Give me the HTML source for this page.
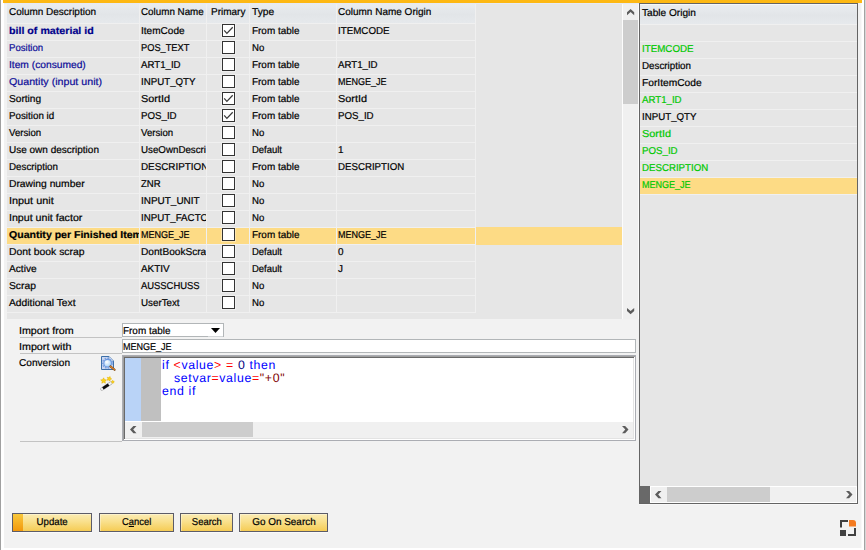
<!DOCTYPE html>
<html><head><meta charset="utf-8"><title>Import</title>
<style>
html,body{margin:0;padding:0;background:#fff;}
body{width:866px;height:550px;overflow:hidden;font-family:"Liberation Sans",sans-serif;font-size:10px;color:#000;text-rendering:geometricPrecision;}
#win{position:relative;width:866px;height:550px;background:#fff;overflow:hidden;}
#win:before{content:"";position:absolute;left:0;top:0;width:1px;height:550px;background:#a0a0a0;}
#win:after{content:"";position:absolute;left:864px;top:0;width:2px;height:550px;background:linear-gradient(to right,#a3a3a3 50%,#d6d6d6 50%);}
#topbar{position:absolute;left:3px;top:0;width:859px;height:3px;background:#fdb813;}
#body{position:absolute;left:4px;top:3px;width:857px;height:545px;background:#f2f2f2;border-right:1px solid #f9f9f9;}
#lt{position:absolute;left:7px;top:4px;width:615px;height:315px;background:#e6e6e6;overflow:hidden;}
.hr{position:absolute;left:0;top:0;width:469px;height:19px;border-bottom:1px solid #f0f0f0;}
.hc{position:absolute;top:0;height:19px;line-height:17px;box-sizing:content-box;border-right:1px solid #f0f0f0;background:linear-gradient(to bottom,#e9ecef 0%,#e2e5e8 55%,#e6e9ec 100%);white-space:nowrap;overflow:hidden;}
.hc{width:auto}
.r{position:absolute;left:0;width:469px;height:16px;border-bottom:1px solid #f0f0f0;}
.r.sel{background:#fddb85;}
#selx{position:absolute;left:469px;top:223px;width:146px;height:18px;background:#fddb85;}
.c{position:absolute;top:0;height:16px;line-height:15px;box-sizing:content-box;border-right:1px solid #f0f0f0;white-space:nowrap;overflow:hidden;}
.c2{text-align:left;}
.cb{position:absolute;left:15px;top:0;width:11px;height:11px;border:1px solid #333;background:#fff;box-shadow:0 0 0 1px rgba(255,255,255,.35);}
.cb svg{position:absolute;left:0;top:0;}
.bl{color:#0c0c98;}
.bb{color:#00008b;font-weight:bold;}
.bd{font-weight:bold;}
#vs{position:absolute;left:622px;top:4px;width:17px;height:315px;background:#f0f0f0;box-shadow:inset 1px 0 0 #fcfcfc,inset -1px 0 0 #fcfcfc;}
svg{overflow:visible;}
#vs .thumb{position:absolute;left:1px;top:16px;width:15px;height:84px;background:#cdcdcd;}
#vs .au{position:absolute;left:4.8px;top:5px;}
#vs .ad{position:absolute;left:4.8px;top:304px;}
#rp{position:absolute;left:639px;top:3px;width:217px;height:499px;border:1px solid #646464;background:#e6e6e6;overflow:hidden;}
#rpo{position:absolute;left:639px;top:504px;width:219px;height:1px;background:#f8f8f8;}
.rh{position:absolute;left:0;top:0;width:217px;height:19px;border-top:1px solid #f6f8fa;border-bottom:1px solid #f0f0f0;line-height:17px;padding:0 0 0 2px;box-sizing:content-box;height:19px;background:linear-gradient(to bottom,#e9ecef 0%,#e2e5e8 55%,#e6e9ec 100%);}
.rr{position:absolute;left:0;width:215px;height:16px;line-height:15px;padding-left:2px;border-bottom:1px solid #f0f0f0;white-space:nowrap;}
.rr.g{color:#00c800;}
.rr.sel{background:#fddb85;}
.corner{position:absolute;left:0;top:482px;width:10px;height:17px;background:#696969;}
#hs2{position:absolute;left:10px;top:482px;width:207px;height:17px;background:#f0f0f0;box-shadow:inset 1px 1px 0 #fff,inset -1px -1px 0 #fff;}
#hs2 .thumb{position:absolute;left:17px;top:1px;width:103px;height:15px;background:#cdcdcd;}
#hs2 .al{position:absolute;left:4.8px;top:4.9px;}
#hs2 .ar{position:absolute;left:195.8px;top:4.9px;}
.lbl{position:absolute;left:19px;line-height:15px;height:14px;white-space:nowrap;}
.ul{position:absolute;left:20px;width:102px;height:1px;background:#c3c3c3;}
#dd{position:absolute;left:122px;top:323px;width:100px;height:12px;border:1px solid #b2b6b8;background:#fff;line-height:15px;padding-left:0;box-sizing:content-box;width:100px;white-space:nowrap;}
#dd svg{position:absolute;left:88px;top:4px;}
#dd:after{content:"";position:absolute;left:85px;top:12px;width:15px;height:1px;background:#d4d7d9;}
#inp{position:absolute;left:122px;top:339px;width:512px;height:12px;border:1px solid #b2b6b8;background:#fff;line-height:15px;padding-left:0;white-space:nowrap;}
#ed{position:absolute;left:122px;top:355px;width:514px;height:86px;background:#fff;box-shadow:inset 1px 1px 0 #abadb3,inset -1px -1px 0 #abadb3,inset 2px 2px 0 #a0a0a0,inset -2px -2px 0 #fff,inset 3px 3px 0 #696969,inset -3px -3px 0 #e3e3e3;}
.btn{position:absolute;top:513px;height:17px;border:1px solid #5c5c68;background:linear-gradient(to bottom,#fbecb4 0%,#f9e08c 45%,#f5cc55 100%);text-align:center;line-height:17px;box-shadow:0 1px 0 #fafafa,inset 1px 1px 0 rgba(255,255,255,.35);}
.btn .acc{position:absolute;left:0;top:0;width:10px;height:17px;background:linear-gradient(to bottom,#f9c83c,#f2980c);}
.btn em{font-style:normal;text-decoration:underline;}
#rsz{position:absolute;left:840px;top:520px;}
.ic{position:absolute;}
#ed .g1{position:absolute;left:3px;top:3px;width:16px;height:63px;background:#b9d3f7;}
#ed .g2{position:absolute;left:19px;top:3px;width:20px;height:63px;background:#c0c0c0;}
#ed .code{position:absolute;left:40px;top:4px;font-size:12.3px;line-height:13px;white-space:pre;letter-spacing:0.66px;}
#ed .code b{font-weight:normal;color:#0000ff;}
#ed .code i{font-style:normal;color:#ff0000;}
#ed .code u{text-decoration:none;color:#000080;}
#ed .code s{text-decoration:none;color:#800000;}
#ed .code .in{padding-left:12px;}
#hs1{position:absolute;left:3px;top:66px;width:508px;height:17px;background:#f0f0f0;box-shadow:inset 0 1px 0 #fff;}
#hs1 .thumb{position:absolute;left:17px;top:1px;width:111px;height:15px;background:#cdcdcd;}
#hs1 .al{position:absolute;left:4.8px;top:4.9px;}
#hs1 .ar{position:absolute;left:496.6px;top:4.9px;}
.t{display:inline-block;transform:scaleX(.92);transform-origin:0 0;}
.bb .t,.bd .t{transform:scaleX(.97);}
.btn .t{transform-origin:50% 0;}
.t{-webkit-text-stroke:0.2px currentColor;}
#l3{position:absolute;left:4px;top:3px;width:635px;height:1px;background:#e6eaf4;}
</style></head>
<body>
<div id="win">
<div id="topbar"></div>
<div id="body"></div>
<div id="l3"></div>
<div id="lt">
<div class="hr"><div class="hc c0" style="left:0px;width:130px;padding-left:2px"><span class="t" style="transform:scaleX(0.997)">Column Description</span></div><div class="hc c1" style="left:133px;width:65px;padding-left:1px"><span class="t" style="transform:scaleX(0.982)">Column Name</span></div><div class="hc c2" style="left:200px;width:38px;padding-left:4px"><span class="t" style="transform:scaleX(0.998)">Primary</span></div><div class="hc c3" style="left:243px;width:84px;padding-left:2px"><span class="t" style="transform:scaleX(1.024)">Type</span></div><div class="hc c4" style="left:330px;width:137px;padding-left:1px"><span class="t" style="transform:scaleX(0.999)">Column Name Origin</span></div></div>
<div class="r" style="top:20px"><div class="c c0 bb" style="left:0px;width:130px;padding-left:2px"><span class="t" style="transform:scaleX(1.066)">bill of material id</span></div><div class="c c1" style="left:133px;width:65px;padding-left:1px"><span class="t" style="transform:scaleX(1.006)">ItemCode</span></div><div class="c c2" style="left:200px;width:42px;"><span class="cb"><svg width="11" height="11" viewBox="0 0 11 11"><path d="M1.2 5.4 L3.9 8.4 L9.7 2.3" fill="none" stroke="#3a3a3a" stroke-width="1.25"/></svg></span></div><div class="c c3" style="left:243px;width:84px;padding-left:2px"><span class="t" style="transform:scaleX(0.992)">From table</span></div><div class="c c4" style="left:330px;width:137px;padding-left:1px"><span class="t" style="transform:scaleX(0.978)">ITEMCODE</span></div></div>
<div class="r" style="top:37px"><div class="c c0 bl" style="left:0px;width:130px;padding-left:2px"><span class="t" style="transform:scaleX(0.96)">Position</span></div><div class="c c1" style="left:133px;width:65px;padding-left:1px"><span class="t" style="transform:scaleX(0.926)">POS_TEXT</span></div><div class="c c2" style="left:200px;width:42px;"><span class="cb"></span></div><div class="c c3" style="left:243px;width:84px;padding-left:2px"><span class="t" style="transform:scaleX(0.961)">No</span></div><div class="c c4" style="left:330px;width:137px;padding-left:1px"></div></div>
<div class="r" style="top:54px"><div class="c c0 bl" style="left:0px;width:130px;padding-left:2px"><span class="t" style="transform:scaleX(1.023)">Item (consumed)</span></div><div class="c c1" style="left:133px;width:65px;padding-left:1px"><span class="t" style="transform:scaleX(0.967)">ART1_ID</span></div><div class="c c2" style="left:200px;width:42px;"><span class="cb"></span></div><div class="c c3" style="left:243px;width:84px;padding-left:2px"><span class="t" style="transform:scaleX(0.992)">From table</span></div><div class="c c4" style="left:330px;width:137px;padding-left:1px"><span class="t" style="transform:scaleX(0.967)">ART1_ID</span></div></div>
<div class="r" style="top:71px"><div class="c c0 bl" style="left:0px;width:130px;padding-left:2px"><span class="t" style="transform:scaleX(1.066)">Quantity (input unit)</span></div><div class="c c1" style="left:133px;width:65px;padding-left:1px"><span class="t" style="transform:scaleX(0.971)">INPUT_QTY</span></div><div class="c c2" style="left:200px;width:42px;"><span class="cb"></span></div><div class="c c3" style="left:243px;width:84px;padding-left:2px"><span class="t" style="transform:scaleX(0.992)">From table</span></div><div class="c c4" style="left:330px;width:137px;padding-left:1px"><span class="t" style="transform:scaleX(0.902)">MENGE_JE</span></div></div>
<div class="r" style="top:88px"><div class="c c0" style="left:0px;width:130px;padding-left:2px"><span class="t" style="transform:scaleX(1.015)">Sorting</span></div><div class="c c1" style="left:133px;width:65px;padding-left:1px"><span class="t" style="transform:scaleX(1.09)">SortId</span></div><div class="c c2" style="left:200px;width:42px;"><span class="cb"><svg width="11" height="11" viewBox="0 0 11 11"><path d="M1.2 5.4 L3.9 8.4 L9.7 2.3" fill="none" stroke="#3a3a3a" stroke-width="1.25"/></svg></span></div><div class="c c3" style="left:243px;width:84px;padding-left:2px"><span class="t" style="transform:scaleX(0.992)">From table</span></div><div class="c c4" style="left:330px;width:137px;padding-left:1px"><span class="t" style="transform:scaleX(1.09)">SortId</span></div></div>
<div class="r" style="top:105px"><div class="c c0" style="left:0px;width:130px;padding-left:2px"><span class="t" style="transform:scaleX(0.979)">Position id</span></div><div class="c c1" style="left:133px;width:65px;padding-left:1px"><span class="t" style="transform:scaleX(0.97)">POS_ID</span></div><div class="c c2" style="left:200px;width:42px;"><span class="cb"><svg width="11" height="11" viewBox="0 0 11 11"><path d="M1.2 5.4 L3.9 8.4 L9.7 2.3" fill="none" stroke="#3a3a3a" stroke-width="1.25"/></svg></span></div><div class="c c3" style="left:243px;width:84px;padding-left:2px"><span class="t" style="transform:scaleX(0.992)">From table</span></div><div class="c c4" style="left:330px;width:137px;padding-left:1px"><span class="t" style="transform:scaleX(0.97)">POS_ID</span></div></div>
<div class="r" style="top:122px"><div class="c c0" style="left:0px;width:130px;padding-left:2px"><span class="t" style="transform:scaleX(0.964)">Version</span></div><div class="c c1" style="left:133px;width:65px;padding-left:1px"><span class="t" style="transform:scaleX(0.964)">Version</span></div><div class="c c2" style="left:200px;width:42px;"><span class="cb"></span></div><div class="c c3" style="left:243px;width:84px;padding-left:2px"><span class="t" style="transform:scaleX(0.961)">No</span></div><div class="c c4" style="left:330px;width:137px;padding-left:1px"></div></div>
<div class="r" style="top:139px"><div class="c c0" style="left:0px;width:130px;padding-left:2px"><span class="t" style="transform:scaleX(0.999)">Use own description</span></div><div class="c c1" style="left:133px;width:65px;padding-left:1px"><span class="t" style="transform:scaleX(0.975)">UseOwnDescription</span></div><div class="c c2" style="left:200px;width:42px;"><span class="cb"></span></div><div class="c c3" style="left:243px;width:84px;padding-left:2px"><span class="t" style="transform:scaleX(0.947)">Default</span></div><div class="c c4" style="left:330px;width:137px;padding-left:1px"><span class="t" style="transform:scaleX(0.99)">1</span></div></div>
<div class="r" style="top:156px"><div class="c c0" style="left:0px;width:130px;padding-left:2px"><span class="t" style="transform:scaleX(0.979)">Description</span></div><div class="c c1" style="left:133px;width:65px;padding-left:1px"><span class="t" style="transform:scaleX(0.985)">DESCRIPTION</span></div><div class="c c2" style="left:200px;width:42px;"><span class="cb"></span></div><div class="c c3" style="left:243px;width:84px;padding-left:2px"><span class="t" style="transform:scaleX(0.992)">From table</span></div><div class="c c4" style="left:330px;width:137px;padding-left:1px"><span class="t" style="transform:scaleX(0.969)">DESCRIPTION</span></div></div>
<div class="r" style="top:173px"><div class="c c0" style="left:0px;width:130px;padding-left:2px"><span class="t" style="transform:scaleX(1.03)">Drawing number</span></div><div class="c c1" style="left:133px;width:65px;padding-left:1px"><span class="t" style="transform:scaleX(0.955)">ZNR</span></div><div class="c c2" style="left:200px;width:42px;"><span class="cb"></span></div><div class="c c3" style="left:243px;width:84px;padding-left:2px"><span class="t" style="transform:scaleX(0.961)">No</span></div><div class="c c4" style="left:330px;width:137px;padding-left:1px"></div></div>
<div class="r" style="top:190px"><div class="c c0" style="left:0px;width:130px;padding-left:2px"><span class="t" style="transform:scaleX(1.085)">Input unit</span></div><div class="c c1" style="left:133px;width:65px;padding-left:1px"><span class="t" style="transform:scaleX(0.995)">INPUT_UNIT</span></div><div class="c c2" style="left:200px;width:42px;"><span class="cb"></span></div><div class="c c3" style="left:243px;width:84px;padding-left:2px"><span class="t" style="transform:scaleX(0.961)">No</span></div><div class="c c4" style="left:330px;width:137px;padding-left:1px"></div></div>
<div class="r" style="top:207px"><div class="c c0" style="left:0px;width:130px;padding-left:2px"><span class="t" style="transform:scaleX(1.064)">Input unit factor</span></div><div class="c c1" style="left:133px;width:65px;padding-left:1px"><span class="t" style="transform:scaleX(0.975)">INPUT_FACTOR</span></div><div class="c c2" style="left:200px;width:42px;"><span class="cb"></span></div><div class="c c3" style="left:243px;width:84px;padding-left:2px"><span class="t" style="transform:scaleX(0.961)">No</span></div><div class="c c4" style="left:330px;width:137px;padding-left:1px"></div></div>
<div class="r sel" style="top:224px"><div class="c c0 bd" style="left:0px;width:130px;padding-left:2px"><span class="t" style="transform:scaleX(1.054)">Quantity per Finished Item</span></div><div class="c c1" style="left:133px;width:65px;padding-left:1px"><span class="t" style="transform:scaleX(0.902)">MENGE_JE</span></div><div class="c c2" style="left:200px;width:42px;"><span class="cb"></span></div><div class="c c3" style="left:243px;width:84px;padding-left:2px"><span class="t" style="transform:scaleX(0.992)">From table</span></div><div class="c c4" style="left:330px;width:137px;padding-left:1px"><span class="t" style="transform:scaleX(0.902)">MENGE_JE</span></div></div>
<div class="r" style="top:241px"><div class="c c0" style="left:0px;width:130px;padding-left:2px"><span class="t" style="transform:scaleX(1.037)">Dont book scrap</span></div><div class="c c1" style="left:133px;width:65px;padding-left:1px"><span class="t" style="transform:scaleX(1.012)">DontBookScrap</span></div><div class="c c2" style="left:200px;width:42px;"><span class="cb"></span></div><div class="c c3" style="left:243px;width:84px;padding-left:2px"><span class="t" style="transform:scaleX(0.947)">Default</span></div><div class="c c4" style="left:330px;width:137px;padding-left:1px"><span class="t" style="transform:scaleX(0.99)">0</span></div></div>
<div class="r" style="top:258px"><div class="c c0" style="left:0px;width:130px;padding-left:2px"><span class="t" style="transform:scaleX(1.015)">Active</span></div><div class="c c1" style="left:133px;width:65px;padding-left:1px"><span class="t" style="transform:scaleX(0.993)">AKTIV</span></div><div class="c c2" style="left:200px;width:42px;"><span class="cb"></span></div><div class="c c3" style="left:243px;width:84px;padding-left:2px"><span class="t" style="transform:scaleX(0.947)">Default</span></div><div class="c c4" style="left:330px;width:137px;padding-left:1px"><span class="t" style="transform:scaleX(0.99)">J</span></div></div>
<div class="r" style="top:275px"><div class="c c0" style="left:0px;width:130px;padding-left:2px"><span class="t" style="transform:scaleX(1.03)">Scrap</span></div><div class="c c1" style="left:133px;width:65px;padding-left:1px"><span class="t" style="transform:scaleX(0.941)">AUSSCHUSS</span></div><div class="c c2" style="left:200px;width:42px;"><span class="cb"></span></div><div class="c c3" style="left:243px;width:84px;padding-left:2px"><span class="t" style="transform:scaleX(0.961)">No</span></div><div class="c c4" style="left:330px;width:137px;padding-left:1px"></div></div>
<div class="r" style="top:292px"><div class="c c0" style="left:0px;width:130px;padding-left:2px"><span class="t" style="transform:scaleX(1.026)">Additional Text</span></div><div class="c c1" style="left:133px;width:65px;padding-left:1px"><span class="t" style="transform:scaleX(0.978)">UserText</span></div><div class="c c2" style="left:200px;width:42px;"><span class="cb"></span></div><div class="c c3" style="left:243px;width:84px;padding-left:2px"><span class="t" style="transform:scaleX(0.961)">No</span></div><div class="c c4" style="left:330px;width:137px;padding-left:1px"></div></div>
<div id="selx"></div>
</div>
<div id="vs"><div class="thumb"></div><svg class="au" width="8" height="7" viewBox="0 0 8 7"><path d="M3.6 0 L7.2 3.2 L7.2 6.2 L3.6 3.1 L0 6.2 L0 3.2 Z" fill="#5c5c5c"/></svg><svg class="ad" width="8" height="7" viewBox="0 0 8 7"><path d="M3.6 6.2 L7.2 3 L7.2 0 L3.6 3.1 L0 0 L0 3 Z" fill="#5c5c5c"/></svg></div>
<div id="rp">
<div class="rh"><span class="t" style="transform:scaleX(1.01)">Table Origin</span></div>
<div class="rr " style="top:21px"></div>
<div class="rr g" style="top:38px"><span class="t" style="transform:scaleX(0.978)">ITEMCODE</span></div>
<div class="rr " style="top:55px"><span class="t" style="transform:scaleX(0.979)">Description</span></div>
<div class="rr " style="top:72px"><span class="t" style="transform:scaleX(1.021)">ForItemCode</span></div>
<div class="rr g" style="top:89px"><span class="t" style="transform:scaleX(0.967)">ART1_ID</span></div>
<div class="rr " style="top:106px"><span class="t" style="transform:scaleX(0.971)">INPUT_QTY</span></div>
<div class="rr g" style="top:123px"><span class="t" style="transform:scaleX(1.09)">SortId</span></div>
<div class="rr g" style="top:140px"><span class="t" style="transform:scaleX(0.97)">POS_ID</span></div>
<div class="rr g" style="top:157px"><span class="t" style="transform:scaleX(0.969)">DESCRIPTION</span></div>
<div class="rr g sel" style="top:174px"><span class="t" style="transform:scaleX(0.902)">MENGE_JE</span></div>
<div class="corner"></div>
<div id="hs2"><div class="thumb"></div><svg class="al" width="7" height="8" viewBox="0 0 7 8"><path d="M6.5 0 L3.4 0 L0 3.6 L3.4 7.2 L6.5 7.2 L3.2 3.6 Z" fill="#5c5c5c"/></svg><svg class="ar" width="7" height="8" viewBox="0 0 7 8"><path d="M0 0 L3.1 0 L6.5 3.6 L3.1 7.2 L0 7.2 L3.3 3.6 Z" fill="#5c5c5c"/></svg></div>
</div>
<div id="rpo"></div>
<div class="lbl" style="top:324px"><span class="t" style="transform:scaleX(1.068)">Import from</span></div><div class="ul" style="top:337px"></div>
<div class="lbl" style="top:340px"><span class="t" style="transform:scaleX(1.071)">Import with</span></div><div class="ul" style="top:353px"></div>
<div class="lbl" style="top:356px"><span class="t" style="transform:scaleX(1.01)">Conversion</span></div><div class="ul" style="top:441px;width:102px"></div>
<div id="dd"><span class="t" style="transform:scaleX(0.992)">From table</span><svg width="9" height="5" viewBox="0 0 9 5"><path d="M0 0 H9 L4.5 5 Z" fill="#000"/></svg></div>
<div id="inp"><span class="t" style="transform:scaleX(0.902)">MENGE_JE</span></div>
<svg class="ic" style="left:98px;top:354px" width="20" height="40" viewBox="0 0 20 40">
<defs><radialGradient id="gl" cx="0.4" cy="0.35" r="0.7"><stop offset="0" stop-color="#ffffff"/><stop offset="1" stop-color="#9ccdf7"/></radialGradient></defs>
<path d="M3.5 2.5 H11 L15.5 7 V15.5 H3.5 Z" fill="#ccd8f1" stroke="#3c6fa8" stroke-width="1"/>
<path d="M11 2.5 V7 H15.5" fill="#eef3fb" stroke="#5a86b8" stroke-width=".8"/>
<circle cx="9.4" cy="9.2" r="4.9" fill="none" stroke="#6c94dc" stroke-width="1.4" stroke-dasharray="1.6 1.2" opacity=".8"/>
<circle cx="9.6" cy="9.2" r="3.8" fill="url(#gl)" stroke="#6a98e0" stroke-width="1.1"/>
<path d="M12.4 12.4 L16.6 15.8" stroke="#7a4a18" stroke-width="2.1" stroke-linecap="round"/>
<path d="M12.6 12.5 L16.4 15.6" stroke="#e8862a" stroke-width="1.1" stroke-linecap="round"/>
<path d="M4 35 L12.8 29.2" stroke="#9a9a9a" stroke-width="3.2" stroke-linecap="round"/>
<path d="M4 35 L12.8 29.2" stroke="#f4f4f4" stroke-width="2.2" stroke-linecap="round"/>
<path d="M4.9 34.4 L10.6 30.7" stroke="#0c0c0c" stroke-width="2.8" stroke-linecap="butt"/>
<polygon points="5.6,23.8 6.5,25.6 8.5,25.9 7.0,27.3 7.4,29.2 5.6,28.3 3.8,29.2 4.2,27.3 2.7,25.9 4.7,25.6" fill="#f8d21c" stroke="#e6b000" stroke-width=".5"/>
<polygon points="12.1,22.5 12.3,24.1 13.7,24.9 12.2,25.6 11.9,27.2 10.8,26.0 9.1,26.2 9.9,24.8 9.2,23.3 10.8,23.6" fill="#f8d21c" stroke="#e6b000" stroke-width=".5"/>
<polygon points="14.5,26.2 15.2,27.1 16.3,27.1 15.7,28.0 16.0,29.1 15.0,28.8 14.1,29.4 14.0,28.3 13.1,27.7 14.2,27.3" fill="#f8d21c" stroke="#e6b000" stroke-width=".4"/>
</svg>
<div id="ed"><div class="g1"></div><div class="g2"></div>
<div class="code"><div><b>if</b> <i>&lt;</i><b>value</b><i>&gt;</i> <i>=</i> <u>0</u> <b>then</b></div><div class="in"><b>setvar</b><i>=</i><b>value</b><i>=</i><s>"+0"</s></div><div><b>end if</b></div></div>
<div id="hs1"><div class="thumb"></div>
<svg class="al" width="7" height="8" viewBox="0 0 7 8"><path d="M6.5 0 L3.4 0 L0 3.6 L3.4 7.2 L6.5 7.2 L3.2 3.6 Z" fill="#5c5c5c"/></svg>
<svg class="ar" width="7" height="8" viewBox="0 0 7 8"><path d="M0 0 L3.1 0 L6.5 3.6 L3.1 7.2 L0 7.2 L3.3 3.6 Z" fill="#5c5c5c"/></svg>
</div></div>
<div class="btn def" style="left:12px;width:78px"><span class="acc"></span><span class="t" style="transform:scaleX(.967)">Update</span></div>
<div class="btn" style="left:99px;width:73px"><span class="t" style="transform:scaleX(.941)">C<em>a</em>ncel</span></div>
<div class="btn" style="left:180px;width:51px"><span class="t" style="transform:scaleX(.95)">Search</span></div>
<div class="btn" style="left:239px;width:87px"><span class="t" style="transform:scaleX(.992)">Go On Search</span></div>
<svg id="rsz" width="16" height="16" viewBox="0 0 16 16"><path d="M0 0 H8 V2 H2 V7.5 H0 Z" fill="#404040"/><path d="M9 0 H13 Q16 0 16 3 V6.5 H9 Z" fill="#f47b20"/><rect x="0" y="10" width="6" height="6" fill="#404040"/><path d="M16 8 V16 H8 V14 H14 V8 Z" fill="#404040"/></svg>
</div>
</body></html>
